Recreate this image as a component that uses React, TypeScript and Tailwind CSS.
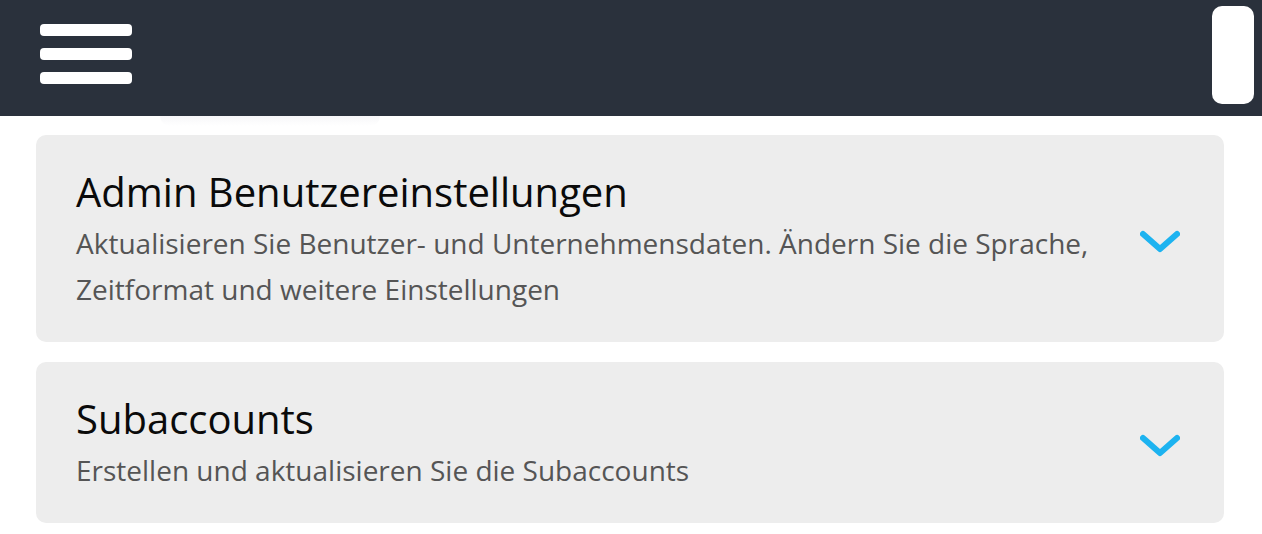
import React from "react";

const sections = [
  {
    title: "Admin Benutzereinstellungen",
    description:
      "Aktualisieren Sie Benutzer- und Unternehmensdaten. Ändern Sie die Sprache, Zeitformat und weitere Einstellungen",
  },
  {
    title: "Subaccounts",
    description: "Erstellen und aktualisieren Sie die Subaccounts",
  },
];

function Chevron() {
  return (
    <svg width="40" height="24" viewBox="0 0 40 24" className="shrink-0">
      <polyline
        points="3,4 20,19 37,4"
        fill="none"
        stroke="#1db3f0"
        strokeWidth="6"
        strokeLinecap="round"
        strokeLinejoin="round"
      />
    </svg>
  );
}

export default function App() {
  return (
    <div className="relative min-h-[534px] bg-white font-['Open_Sans',sans-serif]">
      <header className="flex h-[116px] items-start justify-between bg-[#2a313c]">
        <button className="ml-[40px] mt-[24px] flex flex-col gap-[12px]">
          <span className="block h-[12px] w-[92px] rounded-[4px] bg-white" />
          <span className="block h-[12px] w-[92px] rounded-[4px] bg-white" />
          <span className="block h-[12px] w-[92px] rounded-[4px] bg-white" />
        </button>
        <div className="mr-[8px] mt-[6px] h-[98px] w-[42px] rounded-[10px] bg-white" />
      </header>

      <div className="pointer-events-none absolute left-[160px] top-[116px] h-[10px] w-[220px] rounded-b-full bg-gradient-to-b from-[#f7f7f9] to-white" />

      <main className="flex flex-col gap-[20px] pb-[12px] pl-[36px] pr-[38px] pt-[19px]">
        {sections.map((s) => (
          <div
            key={s.title}
            className="flex items-center gap-[30px] rounded-[10px] bg-[#ededed] pb-[30px] pl-[40px] pr-[44px] pt-[33px]"
          >
            <div className="min-w-0 flex-1">
              <h2 className="text-[40px] font-normal leading-[48px] text-[#0a0a0a]">{s.title}</h2>
              <p className="mt-[4px] text-[28px] leading-[46px] text-[#555555]">{s.description}</p>
            </div>
            <div className="mt-[4px]">
              <Chevron />
            </div>
          </div>
        ))}
      </main>
    </div>
  );
}
